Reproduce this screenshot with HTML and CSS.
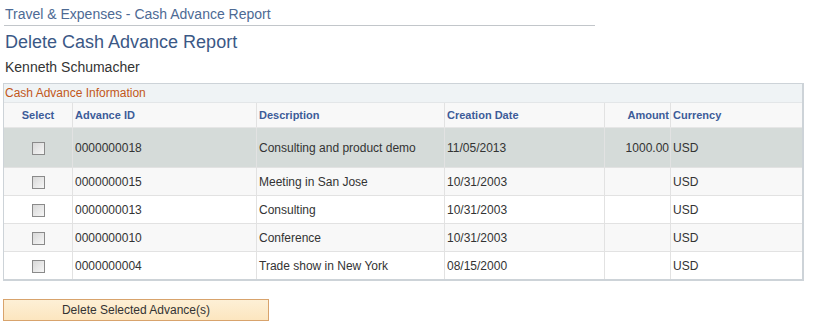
FILE: index.html
```html
<!DOCTYPE html>
<html lang="en">
<head>
    <meta charset="UTF-8">
    <title>Delete Cash Advance Report</title>
    <link rel="stylesheet" href="styles.css">
</head>
<body>
    <div class="page">
        <div class="breadcrumb">Travel &amp; Expenses - Cash Advance Report</div>
        <h1>Delete Cash Advance Report</h1>
        <div class="employee">Kenneth Schumacher</div>

        <div class="grid">
            <div class="grid-title">Cash Advance Information</div>
            <table>
                <thead>
                    <tr>
                        <th class="col-select">Select</th>
                        <th class="col-id">Advance ID</th>
                        <th class="col-desc">Description</th>
                        <th class="col-date">Creation Date</th>
                        <th class="col-amount">Amount</th>
                        <th class="col-cur">Currency</th>
                    </tr>
                </thead>
                <tbody>
                    <tr class="selected">
                        <td class="col-select"><span class="check"></span></td>
                        <td>0000000018</td>
                        <td>Consulting and product demo</td>
                        <td>11/05/2013</td>
                        <td class="col-amount">1000.00</td>
                        <td>USD</td>
                    </tr>
                    <tr class="odd">
                        <td class="col-select"><span class="check"></span></td>
                        <td>0000000015</td>
                        <td>Meeting in San Jose</td>
                        <td>10/31/2003</td>
                        <td class="col-amount"></td>
                        <td>USD</td>
                    </tr>
                    <tr>
                        <td class="col-select"><span class="check"></span></td>
                        <td>0000000013</td>
                        <td>Consulting</td>
                        <td>10/31/2003</td>
                        <td class="col-amount"></td>
                        <td>USD</td>
                    </tr>
                    <tr class="odd">
                        <td class="col-select"><span class="check"></span></td>
                        <td>0000000010</td>
                        <td>Conference</td>
                        <td>10/31/2003</td>
                        <td class="col-amount"></td>
                        <td>USD</td>
                    </tr>
                    <tr>
                        <td class="col-select"><span class="check"></span></td>
                        <td>0000000004</td>
                        <td>Trade show in New York</td>
                        <td>08/15/2000</td>
                        <td class="col-amount"></td>
                        <td>USD</td>
                    </tr>
                </tbody>
            </table>
        </div>

        <button class="delete-btn">Delete Selected Advance(s)</button>
    </div>
</body>
</html>
```

FILE: styles.css
```css
body {
    margin: 0;
    padding: 0;
    background-color: #ffffff;
    font-family: "Liberation Sans", Arial, sans-serif;
    color: #333333;
}

.page {
    padding: 5px 0 0 3px;
}

.breadcrumb {
    width: 590px;
    margin-left: 1px;
    padding: 0 0 2px 1px;
    font-size: 14px;
    line-height: 18px;
    color: #4d6a94;
    border-bottom: 1px solid #c2c6ca;
}

h1 {
    margin: 5px 0 0 2px;
    font-size: 18px;
    font-weight: normal;
    line-height: 22px;
    color: #3b5886;
}

.employee {
    margin: 5px 0 0 2px;
    font-size: 14px;
    line-height: 18px;
    color: #333333;
}

.grid {
    width: 798px;
    margin-top: 7px;
    border: 1px solid #cdd3d8;
    border-right-width: 2px;
    border-bottom-width: 2px;
}

.grid-title {
    height: 18px;
    padding-left: 1px;
    font-size: 12px;
    line-height: 18px;
    color: #c2571a;
    background-color: #eff3f5;
    border-bottom: 1px solid #e3e6e8;
}

table {
    width: 100%;
    border-collapse: collapse;
    font-size: 12px;
}

th {
    height: 24px;
    padding: 0 2px;
    text-align: left;
    font-size: 11px;
    font-weight: bold;
    color: #3d5c99;
    background-color: #f8f8f8;
    border-left: 1px solid #e2e2e2;
    border-bottom: 1px solid #e6e6e6;
}

td {
    height: 27px;
    padding: 0 2px;
    border-left: 1px solid #e2e2e2;
    border-top: 1px solid #e2e2e2;
    background-color: #ffffff;
}

th:first-child,
td:first-child {
    border-left: none;
}

tr.odd td {
    background-color: #f8f8f8;
}

tr.selected td {
    height: 39px;
    background-color: #d5dbd9;
    border-top-color: #e8e8e8;
}

.col-select {
    width: 64px;
    text-align: center;
}

.col-id {
    width: 179px;
}

.col-desc {
    width: 183px;
}

.col-date {
    width: 155px;
}

.col-amount {
    width: 62px;
    text-align: right;
}

th.col-amount {
    padding-right: 1px;
}

td.col-amount {
    padding-right: 1px;
}

.check {
    display: inline-block;
    width: 11px;
    height: 11px;
    vertical-align: middle;
    border: 1px solid #8a8a8a;
    background: linear-gradient(135deg, #d8d8d8, #f6f6f6);
}

.delete-btn {
    display: block;
    width: 266px;
    height: 22px;
    margin-top: 18px;
    padding: 0;
    font-family: "Liberation Sans", Arial, sans-serif;
    font-size: 12px;
    color: #333333;
    background: linear-gradient(#fdf0d6, #fce6bf);
    border: 1px solid #d8a36c;
    border-radius: 0;
}
```
